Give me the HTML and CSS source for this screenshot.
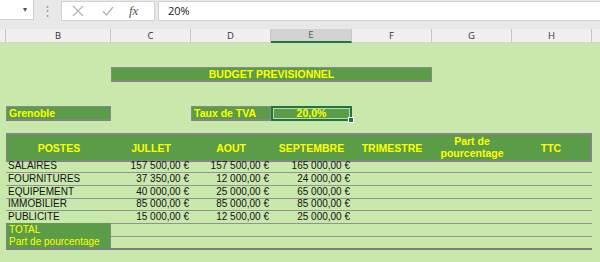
FILE: index.html
```html
<!DOCTYPE html>
<html lang="fr">
<head>
  <meta charset="UTF-8">
  <title>Budget prévisionnel</title>
  <link rel="stylesheet" href="styles.css">
</head>
<body>

  <!-- Barre de formule -->
  <div class="formula-bar">
    <div class="name-box"><span class="arrow">&#9662;</span></div>
    <div class="grip">&#8942;</div>
    <div class="fx-box">
      <svg class="icon" width="12" height="12" viewBox="0 0 12 12"><path d="M1 1 L11 11 M11 1 L1 11" stroke="#b3b3b3" stroke-width="1.2" fill="none"/></svg>
      <svg class="icon" width="12" height="12" viewBox="0 0 12 12"><path d="M1 6.5 L4.5 10 L11 2" stroke="#b3b3b3" stroke-width="1.3" fill="none"/></svg>
      <span class="fx">fx</span>
    </div>
    <div class="value-box">20%</div>
  </div>

  <!-- En-têtes de colonnes -->
  <div class="col-headers">
    <div class="col-head"></div>
    <div class="col-head">B</div>
    <div class="col-head">C</div>
    <div class="col-head">D</div>
    <div class="col-head active">E</div>
    <div class="col-head">F</div>
    <div class="col-head">G</div>
    <div class="col-head">H</div>
    <div class="col-head last"></div>
  </div>

  <!-- Feuille -->
  <div class="sheet">
    <div class="row r12"></div>
    <div class="row r12"></div>

    <div class="row r15">
      <div></div><div></div>
      <div class="box title">BUDGET PREVISIONNEL</div>
    </div>

    <div class="row r12"></div>
    <div class="row r12"></div>

    <div class="row r15">
      <div></div>
      <div class="box left">Grenoble</div>
      <div></div>
      <div class="box left">Taux de TVA</div>
      <div class="box selected">20,0%<span class="handle"></span></div>
    </div>

    <div class="row r12"></div>

    <div class="row head-row">
      <div></div>
      <div class="th first">POSTES</div>
      <div class="th">JULLET</div>
      <div class="th">AOUT</div>
      <div class="th">SEPTEMBRE</div>
      <div class="th">TRIMESTRE</div>
      <div class="th two">Part de<br>pourcentage</div>
      <div class="th end">TTC</div>
    </div>

    <div class="row data r13">
      <div></div>
      <div class="td">SALAIRES</div>
      <div class="td num">157 500,00 €</div>
      <div class="td num">157 500,00 €</div>
      <div class="td num">165 000,00 €</div>
      <div class="td"></div><div class="td"></div><div class="td"></div>
    </div>
    <div class="row data r13">
      <div></div>
      <div class="td">FOURNITURES</div>
      <div class="td num">37 350,00 €</div>
      <div class="td num">12 000,00 €</div>
      <div class="td num">24 000,00 €</div>
      <div class="td"></div><div class="td"></div><div class="td"></div>
    </div>
    <div class="row data r12">
      <div></div>
      <div class="td">EQUIPEMENT</div>
      <div class="td num">40 000,00 €</div>
      <div class="td num">25 000,00 €</div>
      <div class="td num">65 000,00 €</div>
      <div class="td"></div><div class="td"></div><div class="td"></div>
    </div>
    <div class="row data r13">
      <div></div>
      <div class="td">IMMOBILIER</div>
      <div class="td num">85 000,00 €</div>
      <div class="td num">85 000,00 €</div>
      <div class="td num">85 000,00 €</div>
      <div class="td"></div><div class="td"></div><div class="td"></div>
    </div>
    <div class="row data r13">
      <div></div>
      <div class="td">PUBLICITE</div>
      <div class="td num">15 000,00 €</div>
      <div class="td num">12 500,00 €</div>
      <div class="td num">25 000,00 €</div>
      <div class="td"></div><div class="td"></div><div class="td"></div>
    </div>
    <div class="row data r12">
      <div></div>
      <div class="td label">TOTAL</div>
      <div class="td"></div><div class="td"></div><div class="td"></div>
      <div class="td"></div><div class="td"></div><div class="td"></div>
    </div>
    <div class="row data r13 bottom">
      <div></div>
      <div class="td label">Part de pourcentage</div>
      <div class="td"></div><div class="td"></div><div class="td"></div>
      <div class="td"></div><div class="td"></div><div class="td"></div>
    </div>
  </div>

</body>
</html>
```

FILE: styles.css
```css
body {
  margin: 0;
  width: 600px;
  height: 262px;
  overflow: hidden;
  background-color: #c9e8ab;
  font-family: "Liberation Sans", Arial, sans-serif;
}

/* Barre de formule */
.formula-bar {
  display: flex;
  align-items: flex-start;
  height: 29px;
  background-color: #e8e8e8;
}

.name-box {
  width: 34px;
  height: 20px;
  box-sizing: border-box;
  background-color: #fff;
  border-right: 1px solid #cfcfcf;
  border-bottom: 1px solid #cfcfcf;
  display: flex;
  justify-content: flex-end;
  align-items: center;
  padding-right: 6px;
}

.arrow {
  font-size: 8px;
  color: #555;
}

.grip {
  width: 27px;
  text-align: center;
  font-size: 13px;
  line-height: 22px;
  color: #9a9a9a;
}

.fx-box {
  width: 94px;
  height: 20px;
  margin-top: 1px;
  box-sizing: border-box;
  background-color: #fff;
  border: 1px solid #d2d2d2;
  display: flex;
  align-items: center;
  padding-left: 10px;
  gap: 18px;
}

.fx {
  font-family: "Liberation Serif", serif;
  font-style: italic;
  font-size: 13px;
  color: #555;
  margin-left: -3px;
}

.value-box {
  flex: 1;
  height: 20px;
  margin-top: 1px;
  margin-left: 3px;
  box-sizing: border-box;
  background-color: #fff;
  border: 1px solid #d2d2d2;
  border-right: none;
  padding-left: 9px;
  font-family: "Open Sans", sans-serif;
  font-size: 11px;
  line-height: 18px;
  color: #222;
}

/* En-têtes de colonnes */
.col-headers {
  display: grid;
  grid-template-columns: 6px 105px 80px 80px 81px 80px 80px 80px 8px;
  height: 13px;
  background-color: #f0f0f0;
  border-bottom: 1px solid #d4d4d4;
}

.col-head {
  border-right: 1px solid #c6c6c6;
  text-align: center;
  font-family: "Open Sans", sans-serif;
  font-size: 9.5px;
  line-height: 13px;
  color: #333;
}

.col-head.active {
  background-color: #d3d3d3;
  color: #217346;
  border-bottom: 2px solid #217346;
  height: 12px;
  line-height: 12px;
}

.col-head.last {
  border-right: none;
}

/* Feuille */
.sheet {
  font-size: 10px;
}

.row {
  display: grid;
  grid-template-columns: 6px 105px 80px 80px 81px 80px 80px 80px 8px;
}

.r12 { height: 12px; }
.r13 { height: 13px; }
.r15 { height: 15px; }

.box {
  box-sizing: border-box;
  background-color: #5b9c49;
  border: 1px solid #8a8a8a;
  border-bottom: 2px solid #858585;
  color: #ffff00;
  font-weight: bold;
  font-size: 10.5px;
  line-height: 12px;
}

.title {
  grid-column: span 4;
  text-align: center;
}

.left {
  padding-left: 2px;
}

.selected {
  position: relative;
  text-align: center;
  border: 2px solid #217346;
  box-shadow: inset 0 0 0 1px #b9dca0;
  line-height: 11px;
}

.handle {
  position: absolute;
  right: -4px;
  bottom: -4px;
  width: 4px;
  height: 4px;
  background-color: #217346;
  border: 1px solid #fff;
}

/* Tableau */
.head-row {
  height: 26px;
}

.th {
  background-color: #5b9c49;
  border-top: 2px solid #858585;
  border-bottom: 2px solid #858585;
  color: #ffff00;
  font-weight: bold;
  font-size: 10.5px;
  display: flex;
  align-items: center;
  justify-content: center;
  text-align: center;
  line-height: 12px;
}

.th.first {
  border-left: 1px solid #858585;
}

.th.end {
  border-right: 2px solid #858585;
}

.th.two {
  padding-bottom: 1px;
}

.td {
  box-sizing: border-box;
  border-bottom: 1px solid #939393;
  color: #111;
  line-height: 12px;
  padding-left: 2px;
  padding-top: 1px;
  white-space: nowrap;
}

.td.num {
  text-align: right;
  padding-right: 2px;
}

.td.label {
  background-color: #5b9c49;
  color: #ffff00;
  border-left: 1px solid #858585;
  border-right: 1px solid #858585;
}

.bottom .td {
  border-bottom: 2px solid #7d7d7d;
}
```
